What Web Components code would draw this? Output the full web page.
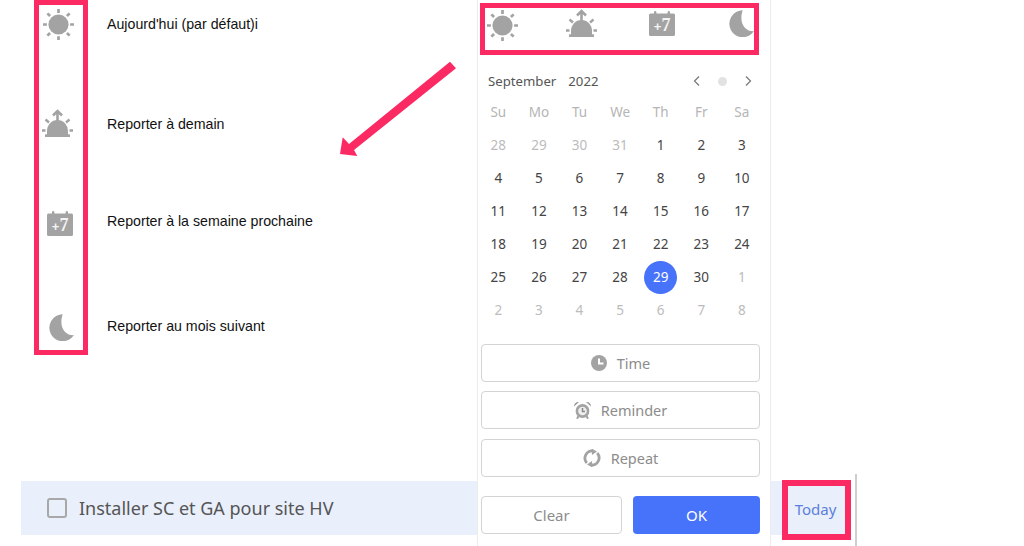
<!DOCTYPE html>
<html>
<head>
<meta charset="utf-8">
<title>Reporter une tâche</title>
<style>
  html, body { margin: 0; background: #fff; }
</style>
</head>
<body>
<annotated-page></annotated-page>

<script>
const PINK = '#fb2a63';
const GREY = '#a3a3a3';

// the four shortcut icons, used in both the legend and the date picker
const ICONS = {
  sun: { w: 31, h: 31, svg: `<svg viewBox="0 0 32 32" fill="${GREY}">
    <circle cx="16" cy="16" r="10.4"/>
    <path stroke="${GREY}" stroke-width="2.8" d="M16 0v4M16 28v4M0 16h4M28 16h4M4.500 4.500l2.800 2.800M24.700 24.700l2.800 2.800M4.500 27.500l2.800-2.800M24.700 7.300l2.800-2.800"/>
  </svg>` },
  rise: { w: 31, h: 28, svg: `<svg viewBox="0 0 31 28" fill="${GREY}">
    <path d="M5 26V22A10.500 11 0 0 1 26 22V26z"/>
    <rect x="3" y="25.300" width="25" height="2.700"/>
    <path fill="none" stroke="${GREY}" stroke-width="2.600" d="M15.500 12V2M11 6.500l4.500-4.500 4.500 4.500"/>
    <path fill="none" stroke="${GREY}" stroke-width="2.400" d="M0 21.500h3.500M27.500 21.500H31M3.500 10.500 7 13.500M27.500 10.500 24 13.500"/>
  </svg>` },
  week: { w: 26, h: 25, svg: `<svg viewBox="0 0 26 25">
    <path fill="${GREY}" d="M5 1.200a1.200 1.200 0 0 1 2.400 0V2.500H18.600V1.200a1.200 1.200 0 0 1 2.400 0V2.500H24.500a1.500 1.500 0 0 1 1.500 1.500V23.500a1.500 1.500 0 0 1-1.500 1.500H1.500A1.500 1.500 0 0 1 0 23.500V4a1.500 1.500 0 0 1 1.500-1.500H5z"/>
    <text y="20" font-family="'Liberation Serif',serif" font-weight="700" fill="#f4f4f4"><tspan x="4.800" font-size="13" font-family="'Liberation Sans',sans-serif">+</tspan><tspan font-size="18">7</tspan></text>
  </svg>` },
  moon: { w: 25, h: 27, svg: `<svg viewBox="0 0 25.500 27.500" fill="${GREY}">
    <path d="M14 .3A13.700 13.700 0 1 0 25.500 21.500C18.500 22.500 9 15 14 .3z"/>
  </svg>` }
};

class ShortcutIcon extends HTMLElement {
  connectedCallback() {
    const icon = ICONS[this.getAttribute('name')];
    this.attachShadow({ mode: 'open' }).innerHTML = `
      <style>
        :host { display: block; flex: none; width: ${icon.w}px; height: ${icon.h}px; line-height: 0; }
        svg { width: 100%; height: 100%; }
      </style>
      ${icon.svg}`;
  }
}

const legendTpl = document.createElement('template');
legendTpl.innerHTML = `
  <style>
    :host {
      display: grid;
      grid-template-columns: 88px 1fr;
      height: 355px;
      font: 14.200px "Liberation Sans", Arial, sans-serif;
      color: #111;
    }
    .strip {
      margin-left: 34px;
      border: 5px solid ${PINK};
      display: flex;
      flex-direction: column;
      align-items: flex-start;
    }
    .strip shortcut-icon:nth-child(1) { margin: 4px 0 0 4px; }
    .strip shortcut-icon:nth-child(2) { margin: 69px 0 0 3px; }
    .strip shortcut-icon:nth-child(3) { margin: 74px 0 0 8px; }
    .strip shortcut-icon:nth-child(4) { margin: 78px 0 0 10px; }
    .labels {
      display: flex;
      flex-direction: column;
      padding: 16px 0 0 19px;
      line-height: 16px;
    }
    .labels span:nth-child(2) { margin-top: 84px; }
    .labels span:nth-child(3) { margin-top: 81px; }
    .labels span:nth-child(4) { margin-top: 89px; }
  </style>
  <div class="strip">
    <shortcut-icon name="sun"></shortcut-icon>
    <shortcut-icon name="rise"></shortcut-icon>
    <shortcut-icon name="week"></shortcut-icon>
    <shortcut-icon name="moon"></shortcut-icon>
  </div>
  <div class="labels">
    <span>Aujourd'hui (par défaut)i</span>
    <span>Reporter à demain</span>
    <span>Reporter à la semaine prochaine</span>
    <span>Reporter au mois suivant</span>
  </div>`;

class ShortcutLegend extends HTMLElement {
  constructor() {
    super();
    this.attachShadow({ mode: 'open' }).appendChild(legendTpl.content.cloneNode(true));
  }
}

const calTpl = document.createElement('template');
calTpl.innerHTML = `
  <style>
    :host { display: block; font-family: "Noto Sans", sans-serif; }
    .head {
      display: flex;
      align-items: center;
      height: 24px;
      padding: 0 7px 0 7px;
      font-size: 13.200px;
      color: #555;
    }
    .head .year { margin-left: 12px; flex: 1; }
    .nav { display: flex; align-items: center; gap: 17px; }
    .dot { width: 9px; height: 9px; border-radius: 50%; background: #e2e2e2; }
    .grid {
      display: grid;
      grid-template-columns: repeat(7, 40.600px);
      grid-auto-rows: 33.100px;
      margin: 2px 0 0 -3px;
      font-size: 13.500px;
      text-align: center;
      color: #444;
    }
    .grid span { display: flex; align-items: center; justify-content: center; }
    .dow { color: #b5b5b5; }
    .off { color: #bcbcbc; }
    .sel { position: relative; color: #fff; z-index: 0; }
    .sel::before {
      content: '';
      position: absolute;
      z-index: -1;
      left: 50%;
      top: 50%;
      width: 33px;
      height: 33px;
      margin: -16.500px;
      border-radius: 50%;
      background: #4772fa;
    }
  </style>
  <div class="head">
    <span>September</span><span class="year">2022</span>
    <div class="nav">
      <svg width="9" height="12" viewBox="0 0 9 12" fill="none" stroke="#777" stroke-width="1.200"><path d="M7 1.500 2.500 6 7 10.500"/></svg>
      <span class="dot"></span>
      <svg width="9" height="12" viewBox="0 0 9 12" fill="none" stroke="#777" stroke-width="1.200"><path d="M2 1.500 6.500 6 2 10.500"/></svg>
    </div>
  </div>
  <div class="grid"></div>`;

class MonthCalendar extends HTMLElement {
  constructor() {
    super();
    this.attachShadow({ mode: 'open' }).appendChild(calTpl.content.cloneNode(true));
  }

  connectedCallback() {
    const grid = this.shadowRoot.querySelector('.grid');
    const cell = (text, cls) => {
      const s = document.createElement('span');
      s.textContent = text;
      if (cls) s.className = cls;
      grid.appendChild(s);
    };
    ['Su', 'Mo', 'Tu', 'We', 'Th', 'Fr', 'Sa'].forEach(d => cell(d, 'dow'));
    [28, 29, 30, 31].forEach(d => cell(d, 'off'));
    for (let d = 1; d <= 30; d++) cell(d, d === 29 ? 'sel' : '');
    [1, 2, 3, 4, 5, 6, 7, 8].forEach(d => cell(d, 'off'));
  }
}

class PanelButton extends HTMLElement {
  connectedCallback() {
    const primary = this.hasAttribute('primary');
    this.attachShadow({ mode: 'open' }).innerHTML = `
      <style>
        :host {
          display: flex;
          align-items: center;
          justify-content: center;
          gap: 10px;
          height: 38px;
          box-sizing: border-box;
          border: ${primary ? '0' : '1px solid #d4d4d4'};
          border-radius: 4px;
          background: ${primary ? '#4772fa' : '#fff'};
          color: ${primary ? '#fff' : '#8c8c8c'};
          font: 14.500px "Noto Sans", sans-serif;
        }
        ::slotted(svg) { flex: none; }
      </style>
      <slot></slot>`;
  }
}

const panelTpl = document.createElement('template');
panelTpl.innerHTML = `
  <style>
    :host {
      display: block;
      background: #fff;
      border-left: 1px solid #ececec;
      border-right: 1px solid #ececec;
      box-sizing: border-box;
      padding: 0 10px 0 3px;
    }
    .shortcuts {
      box-sizing: border-box;
      width: 279px;
      height: 52px;
      margin: 3px 0 0 -1px;
      border: 5px solid ${PINK};
      display: flex;
      align-items: flex-start;
      padding: 2px 0 0 2px;
    }
    .shortcuts shortcut-icon:nth-child(2) { margin: -1px 0 0 48px; }
    .shortcuts shortcut-icon:nth-child(3) { margin: 1px 0 0 52px; }
    .shortcuts shortcut-icon:nth-child(4) { margin-left: 54px; }
    month-calendar { margin-top: 14px; }
    .actions {
      display: flex;
      flex-direction: column;
      gap: 9.300px;
      margin-top: 17.500px;
    }
    .foot {
      display: grid;
      grid-template-columns: 141px 127px;
      justify-content: space-between;
      margin-top: 19px;
    }
    .foot panel-button { font-size: 15px; }
  </style>
  <div class="shortcuts">
    <shortcut-icon name="sun"></shortcut-icon>
    <shortcut-icon name="rise"></shortcut-icon>
    <shortcut-icon name="week"></shortcut-icon>
    <shortcut-icon name="moon"></shortcut-icon>
  </div>
  <month-calendar></month-calendar>
  <div class="actions">
    <panel-button>
      <svg width="16" height="16" viewBox="0 0 16 16"><circle cx="8" cy="8" r="8" fill="${GREY}"/><path d="M8 3.500V8.500H12.500" fill="none" stroke="#fff" stroke-width="2"/></svg>
      <span>Time</span>
    </panel-button>
    <panel-button>
      <svg width="17" height="18" viewBox="0 0 17 18"><circle cx="8.500" cy="10" r="5.600" fill="#eee" stroke="${GREY}" stroke-width="2.600"/><path d="M8.500 7V10.500H11" fill="none" stroke="#888" stroke-width="1.500"/><path d="M0 5.500C0 2 2.500 .5 5 1zM17 5.500C17 2 14.500 .5 12 1z" fill="#999"/><path d="M4.500 15 3 17.800M12.500 15 14 17.800" stroke="${GREY}" stroke-width="2"/></svg>
      <span>Reminder</span>
    </panel-button>
    <panel-button>
      <svg width="18" height="18" viewBox="0 0 18 18" fill="none" stroke="${GREY}" stroke-width="2.800"><path d="M3.800 14A7.300 7.300 0 0 1 10 1.900"/><path d="M14.200 4A7.300 7.300 0 0 1 8 16.100"/><path d="M8.500 -.5 14 2.500 9 6zM9.500 18.500 4 15.500 9 12z" fill="${GREY}" stroke="none"/></svg>
      <span>Repeat</span>
    </panel-button>
  </div>
  <div class="foot">
    <panel-button>Clear</panel-button>
    <panel-button primary>OK</panel-button>
  </div>`;

class DatePanel extends HTMLElement {
  constructor() {
    super();
    this.attachShadow({ mode: 'open' }).appendChild(panelTpl.content.cloneNode(true));
  }
}

const taskTpl = document.createElement('template');
taskTpl.innerHTML = `
  <style>
    :host {
      display: flex;
      align-items: flex-start;
      box-sizing: border-box;
      height: 72px;
      padding-left: 21px;
      font: 18px "Noto Sans", sans-serif;
      color: #555;
    }
    .row {
      flex: 1;
      height: 54px;
      margin: 7px 4px 0 0;
      background: #e9effb;
      display: flex;
      align-items: flex-start;
      padding-left: 26px;
    }
    .check {
      width: 20px;
      height: 20px;
      box-sizing: border-box;
      border: 2px solid #a8a8a8;
      border-radius: 3px;
      margin: 17px 12px 0 0;
    }
    .title { flex: 1; line-height: 54px; }
    .due {
      box-sizing: border-box;
      width: 69px;
      height: 60px;
      margin-top: -1px;
      padding: 0 2px 2px 0;
      border: 6px solid ${PINK};
      display: flex;
      align-items: center;
      justify-content: center;
      color: #5b7fdc;
      font-size: 15px;
      background: #e9effb;
    }
    .rule { width: 2px; height: 72px; background: #cfcfcf; margin-right: 167px; }
  </style>
  <div class="row">
    <span class="check"></span>
    <span class="title"><slot></slot></span>
    <span class="due">Today</span>
  </div>
  <div class="rule"></div>`;

class TaskRow extends HTMLElement {
  constructor() {
    super();
    this.attachShadow({ mode: 'open' }).appendChild(taskTpl.content.cloneNode(true));
  }
}

const pageTpl = document.createElement('template');
pageTpl.innerHTML = `
  <style>
    :host {
      display: grid;
      position: relative;
      width: 1024px;
      height: 546px;
      overflow: hidden;
      background: #fff;
      grid-template-columns: 477px 294px 1fr;
      grid-template-rows: 474px 72px;
    }
    shortcut-legend { grid-column: 1; grid-row: 1; }
    date-panel { grid-column: 2; grid-row: 1 / 3; z-index: 1; }
    task-row { grid-column: 1 / 4; grid-row: 2; }
    .arrow { position: absolute; left: 330px; top: 50px; }
  </style>
  <shortcut-legend></shortcut-legend>
  <date-panel></date-panel>
  <task-row>Installer SC et GA pour site HV</task-row>
  <svg class="arrow" width="140" height="120" viewBox="0 0 140 120">
    <path fill="${PINK}" d="M120 11.700 126 18.300 24 100 27.300 106 10 104 12.700 87.300 19 94z"/>
  </svg>`;

class AnnotatedPage extends HTMLElement {
  constructor() {
    super();
    this.attachShadow({ mode: 'open' }).appendChild(pageTpl.content.cloneNode(true));
  }
}

customElements.define('shortcut-icon', ShortcutIcon);
customElements.define('shortcut-legend', ShortcutLegend);
customElements.define('month-calendar', MonthCalendar);
customElements.define('panel-button', PanelButton);
customElements.define('date-panel', DatePanel);
customElements.define('task-row', TaskRow);
customElements.define('annotated-page', AnnotatedPage);
</script>
</body>
</html>
